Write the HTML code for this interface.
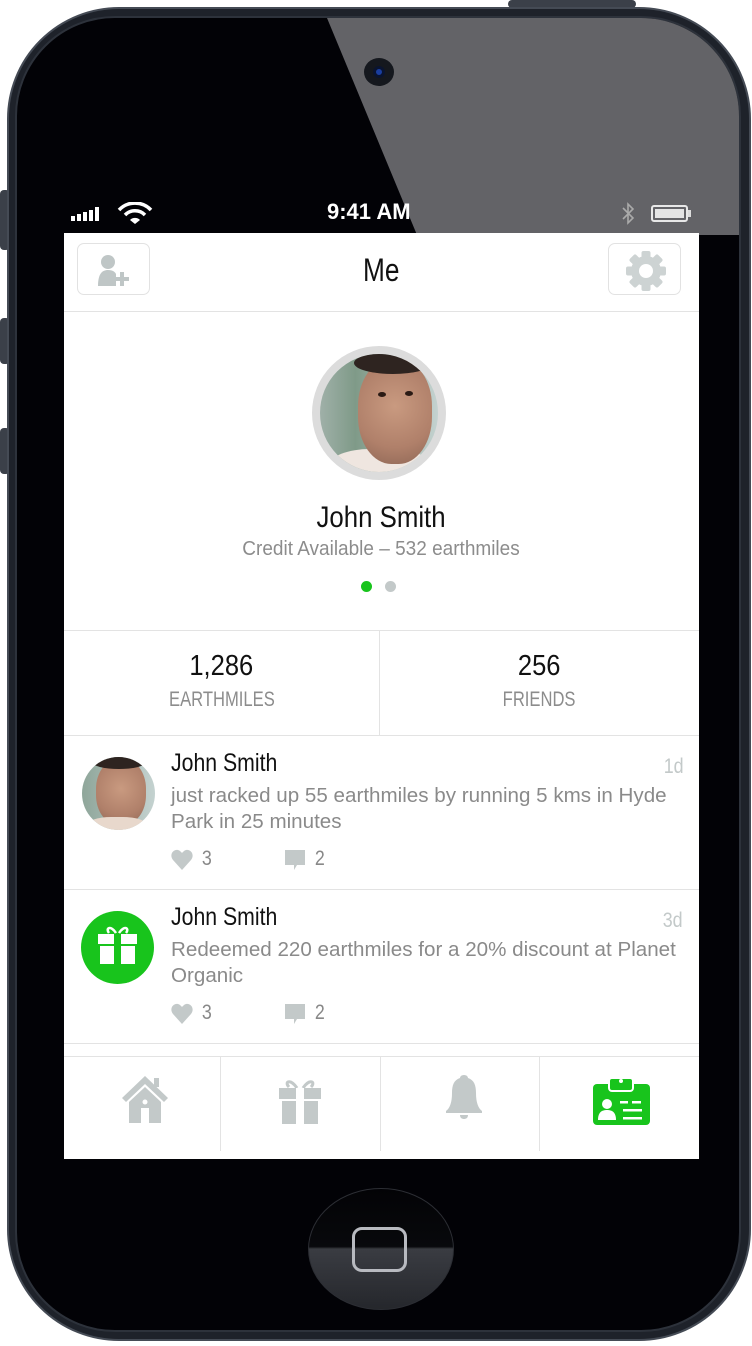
<!DOCTYPE html>
<html><head><meta charset="utf-8"><style>
*{margin:0;padding:0;box-sizing:border-box}
body{width:752px;height:1346px;background:#fff;position:relative;overflow:hidden;font-family:"Liberation Sans",sans-serif}
.abs{position:absolute}
.n{display:inline-block;white-space:nowrap}
.phone{left:7px;top:7px;width:744px;height:1334px;border-radius:112px;background:#1e222a;border:2px solid #454b55}
.inner{left:15px;top:16px;width:726px;height:1316px;border-radius:100px;background:#020206;border:2px solid #2d323b;overflow:hidden}
.btnside{left:0;width:10px;background:#3b4049;border-radius:4px}
.screen{left:64px;top:233px;width:635px;height:926px;background:#fff;overflow:hidden}
.hdr-btn{position:absolute;top:10px;width:73px;height:52px;border:1px solid #e2e2e2;border-radius:7px;background:#fff}
.line{position:absolute;background:#e3e3e3}
.name{font-size:25px;color:#111}
.txt{color:#8a8a8a;font-size:20.6px}
</style></head><body>
<div class="abs btnside" style="top:190px;height:60px"></div>
<div class="abs btnside" style="top:318px;height:46px"></div>
<div class="abs btnside" style="top:428px;height:46px"></div>
<div class="abs" style="left:508px;top:0;width:128px;height:8px;background:#3b4049;border-radius:4px"></div>
<div class="abs phone"></div>
<div class="abs inner"><div class="abs" style="left:0;top:0;width:726px;height:1316px;background:#636367;clip-path:polygon(310px 0,726px 0,726px 217px,400px 217px)"></div></div>
<div class="abs" style="left:364px;top:58px;width:30px;height:28px;border-radius:50%;background:#15181e"></div>
<div class="abs" style="left:373px;top:66px;width:12px;height:12px;border-radius:50%;background:#1a3ea0;border:3px solid #0a1430"></div>
<!-- status bar -->
<svg class="abs" style="left:71px;top:207px" width="40" height="14"><rect x="0" y="9" width="4" height="5" fill="#fff"/><rect x="6" y="7" width="4" height="7" fill="#fff"/><rect x="12" y="5" width="4" height="9" fill="#fff"/><rect x="18" y="3" width="4" height="11" fill="#fff"/><rect x="24" y="0" width="4" height="14" fill="#fff"/></svg>
<svg class="abs" style="left:117px;top:202px" width="36" height="22" viewBox="0 0 36 22"><path d="M2 8 A22 22 0 0 1 34 8" stroke="#fff" stroke-width="3.5" fill="none"/><path d="M8 13 A14 14 0 0 1 28 13" stroke="#fff" stroke-width="3.5" fill="none"/><path d="M13 18 L18 22 L23 18 A7 7 0 0 0 13 18Z" fill="#fff"/></svg>
<div class="abs" style="left:327px;top:199px;color:#fff;font-weight:bold;font-size:22px">9:41 AM</div>
<svg class="abs" style="left:619px;top:201px" width="18" height="26"><path d="M4 7 L14 17 L9 22 L9 3 L14 8 L4 18" stroke="#aaa" stroke-width="1.6" fill="none"/></svg>
<div class="abs" style="left:651px;top:205px;width:37px;height:17px;border:2px solid #e8e8e8;border-radius:3px;padding:2px"><div style="width:100%;height:100%;background:#e4e4e4"></div></div>
<div class="abs" style="left:688px;top:210px;width:3px;height:7px;background:#ddd"></div>
<!-- screen -->
<div class="abs screen">
 <div class="hdr-btn" style="left:13px"><svg width="73" height="52"><circle cx="30" cy="18" r="7" fill="#bfc6c6"/><path d="M20 42 C20 30 24 26 30 26 C35 26 37 28 38 30 L38 42Z" fill="#bfc6c6"/><rect x="37" y="33" width="14" height="4" fill="#bfc6c6"/><rect x="42" y="28" width="4" height="14" fill="#bfc6c6"/></svg></div>
 <div class="abs" style="left:0;width:635px;top:19px;text-align:center;font-size:32px;color:#111"><span class="n" style="transform:scaleX(.82)">Me</span></div>
 <div class="hdr-btn" style="left:544px"><svg width="73" height="52" viewBox="0 0 73 52"><g transform="translate(37 27)" fill="#cdd3d3"><circle r="15"/><g id="t"><rect x="-4.5" y="-20" width="9" height="8" rx="2"/></g><use href="#t" transform="rotate(45)"/><use href="#t" transform="rotate(90)"/><use href="#t" transform="rotate(135)"/><use href="#t" transform="rotate(180)"/><use href="#t" transform="rotate(225)"/><use href="#t" transform="rotate(270)"/><use href="#t" transform="rotate(315)"/><circle r="7" fill="#fff"/></g></svg></div>
 <div class="line" style="left:0;top:78px;width:635px;height:1px"></div>
 <!-- avatar -->
 <div class="abs" style="left:248px;top:113px;width:134px;height:134px;border-radius:50%;background:#dcdcdc"></div>
 <div class="abs" style="left:256px;top:121px;width:118px;height:118px;border-radius:50%;overflow:hidden;background:linear-gradient(90deg,#9fb0a8,#7f9a88 30%,#c4d2d0 100%)">
  <div class="abs" style="left:10px;top:95px;width:100px;height:40px;border-radius:40%;background:#efe6e0"></div>
  <div class="abs" style="left:38px;top:5px;width:74px;height:105px;border-radius:45%;background:radial-gradient(circle at 50% 45%,#c99a80 0,#b0806a 60%,#8d6655 100%)"></div>
  <div class="abs" style="left:34px;top:-2px;width:78px;height:22px;border-radius:50%;background:#2e2420"></div>
  <div class="abs" style="left:58px;top:38px;width:8px;height:5px;border-radius:50%;background:#2a1a14"></div>
  <div class="abs" style="left:85px;top:37px;width:8px;height:5px;border-radius:50%;background:#2a1a14"></div>
 </div>
 <div class="abs" style="left:0;width:635px;top:268px;text-align:center;font-size:30px;color:#111"><span class="n" style="transform:scaleX(.86)">John Smith</span></div>
 <div class="abs" style="left:0;width:635px;top:305px;text-align:center;font-size:20px;color:#8c8c8c"><span class="n" style="transform:scaleX(.95)">Credit Available – 532 earthmiles</span></div>
 <div class="abs" style="left:297px;top:348px;width:11px;height:11px;border-radius:50%;background:#18c41c"></div>
 <div class="abs" style="left:321px;top:348px;width:11px;height:11px;border-radius:50%;background:#c3c9c9"></div>
 <div class="line" style="left:0;top:397px;width:635px;height:1px"></div>
 <div class="line" style="left:315px;top:397px;width:1px;height:105px"></div>
 <div class="abs" style="left:0;width:315px;top:417px;text-align:center;font-size:29px;color:#111"><span class="n" style="transform:scaleX(.88)">1,286</span></div>
 <div class="abs" style="left:0;width:315px;top:455px;text-align:center;font-size:21px;color:#8c8c8c"><span class="n" style="transform:scaleX(.79)">EARTHMILES</span></div>
 <div class="abs" style="left:316px;width:319px;top:417px;text-align:center;font-size:29px;color:#111"><span class="n" style="transform:scaleX(.88)">256</span></div>
 <div class="abs" style="left:316px;width:319px;top:455px;text-align:center;font-size:21px;color:#8c8c8c"><span class="n" style="transform:scaleX(.79)">FRIENDS</span></div>
 <div class="line" style="left:0;top:502px;width:635px;height:1px"></div>
 <!-- post 1 -->
 <div class="abs" style="left:18px;top:524px;width:73px;height:73px;border-radius:50%;overflow:hidden;background:linear-gradient(90deg,#8fa69a,#c4d2d0)">
  <div class="abs" style="left:14px;top:2px;width:50px;height:66px;border-radius:45%;background:radial-gradient(circle at 50% 45%,#c99a80 0,#b0806a 60%,#8d6655 100%)"></div>
  <div class="abs" style="left:10px;top:-2px;width:54px;height:14px;border-radius:50%;background:#2e2420"></div>
  <div class="abs" style="left:5px;top:60px;width:60px;height:20px;border-radius:40%;background:#e8d8cc"></div>
 </div>
 <div class="abs name" style="left:107px;top:516px;transform-origin:left;transform:scaleX(.85)"><span class="n">John Smith</span></div>
 <div class="abs" style="left:598px;top:522px;font-size:21px;color:#c3c9c9"><span class="n" style="transform:scaleX(.85)">1d</span></div>
 <div class="abs txt" style="left:107px;top:550px;width:525px;line-height:26px">just racked up 55 earthmiles by running 5 kms in Hyde Park in 25 minutes</div>
 <svg class="abs" style="left:106px;top:616px" width="24" height="22"><path d="M12 21 L3 11 C-1 6 3 0 8 1 C10 1.5 11 3 12 4 C13 3 14 1.5 16 1 C21 0 25 6 21 11Z" fill="#c3c9c9"/></svg>
 <div class="abs" style="left:137px;top:614px;font-size:21px;color:#888"><span class="n" style="transform:scaleX(.85)">3</span></div>
 <svg class="abs" style="left:221px;top:617px" width="22" height="22"><path d="M0 0 H20 V15 H12 L9 20 L9 15 H0Z" fill="#c3c9c9"/></svg>
 <div class="abs" style="left:250px;top:614px;font-size:21px;color:#888"><span class="n" style="transform:scaleX(.85)">2</span></div>
 <div class="line" style="left:0;top:656px;width:635px;height:1px"></div>
 <!-- post 2 -->
 <div class="abs" style="left:17px;top:678px;width:73px;height:73px;border-radius:50%;background:#18c41c"></div>
 <svg class="abs" style="left:17px;top:678px" width="73" height="73"><path d="M35 22 C30 14 24 17 28 22 M38 22 C43 14 49 17 45 22" stroke="#fff" stroke-width="2.5" fill="none"/><rect x="17" y="23" width="39" height="10" fill="#fff"/><rect x="19" y="35" width="35" height="18" fill="#fff"/><rect x="33" y="23" width="7" height="30" fill="#18c41c"/></svg>
 <div class="abs name" style="left:107px;top:670px;transform-origin:left;transform:scaleX(.85)"><span class="n">John Smith</span></div>
 <div class="abs" style="left:597px;top:676px;font-size:21px;color:#c3c9c9"><span class="n" style="transform:scaleX(.85)">3d</span></div>
 <div class="abs txt" style="left:107px;top:704px;width:525px;line-height:26px">Redeemed 220 earthmiles for a 20% discount at Planet Organic</div>
 <svg class="abs" style="left:106px;top:770px" width="24" height="22"><path d="M12 21 L3 11 C-1 6 3 0 8 1 C10 1.5 11 3 12 4 C13 3 14 1.5 16 1 C21 0 25 6 21 11Z" fill="#c3c9c9"/></svg>
 <div class="abs" style="left:137px;top:768px;font-size:21px;color:#888"><span class="n" style="transform:scaleX(.85)">3</span></div>
 <svg class="abs" style="left:221px;top:771px" width="22" height="22"><path d="M0 0 H20 V15 H12 L9 20 L9 15 H0Z" fill="#c3c9c9"/></svg>
 <div class="abs" style="left:250px;top:768px;font-size:21px;color:#888"><span class="n" style="transform:scaleX(.85)">2</span></div>
 <div class="line" style="left:0;top:810px;width:635px;height:1px"></div>
 <div class="line" style="left:0;top:823px;width:635px;height:1px"></div>
 <!-- tab bar -->
 <div class="line" style="left:156px;top:824px;width:1px;height:94px"></div>
 <div class="line" style="left:316px;top:824px;width:1px;height:94px"></div>
 <div class="line" style="left:475px;top:824px;width:1px;height:94px"></div>
 <svg class="abs" style="left:56px;top:842px" width="50" height="50"><path d="M2 23 L25 1 L48 23 L44 27 L25 9 L6 27Z" fill="#c3c9c9"/><rect x="34" y="3" width="5" height="9" fill="#c3c9c9"/><path d="M9 27 L25 12 L41 27 V48 H9Z" fill="#c3c9c9"/><rect x="21" y="33" width="8" height="15" fill="#fff"/><circle cx="25" cy="27" r="2.5" fill="#fff"/></svg>
 <svg class="abs" style="left:212px;top:843px" width="50" height="48"><path d="M21 12 C14 2 8 6 13 11 M27 12 C34 2 40 6 35 11" stroke="#c3c9c9" stroke-width="3" fill="none"/><rect x="3" y="12" width="42" height="11" fill="#c3c9c9"/><rect x="6" y="25" width="36" height="23" fill="#c3c9c9"/><rect x="20" y="12" width="8" height="36" fill="#fff"/></svg>
 <svg class="abs" style="left:379px;top:842px" width="42" height="48"><path d="M21 0 C24 0 25 2 25 3 C31 5 33 10 33 18 C33 27 35 33 39 36 V38 H3 V36 C7 33 9 27 9 18 C9 10 11 5 17 3 C17 2 18 0 21 0Z" fill="#c3c9c9"/><path d="M17 40 H25 C25 43 23 44 21 44 C19 44 17 43 17 40Z" fill="#c3c9c9"/></svg>
 <svg class="abs" style="left:528px;top:842px" width="60" height="52"><rect x="1" y="9" width="57" height="41" rx="4" fill="#18c41c"/><rect x="17" y="3" width="24" height="13" rx="3" fill="#18c41c" stroke="#fff" stroke-width="2"/><circle cx="29" cy="6" r="2" fill="#fff"/><circle cx="15" cy="29" r="5" fill="#fff"/><path d="M6 45 C6 37 10 35 15 35 C20 35 24 37 24 45Z" fill="#fff"/><rect x="28" y="26" width="8" height="2.5" fill="#fff"/><rect x="40" y="26" width="9" height="2.5" fill="#fff"/><rect x="31" y="34" width="19" height="2.5" fill="#fff"/><rect x="31" y="42" width="19" height="2.5" fill="#fff"/></svg>
</div>
<!-- home button -->
<div class="abs" style="left:308px;top:1188px;width:146px;height:122px;border-radius:50%;background:linear-gradient(#030306 0,#08090c 48%,#3a3c42 50%,#25272c 100%);border:1px solid #2c2e34"></div>
<div class="abs" style="left:352px;top:1227px;width:55px;height:45px;border-radius:10px;border:3px solid #b8bac0;background:transparent"></div>
</body></html>
